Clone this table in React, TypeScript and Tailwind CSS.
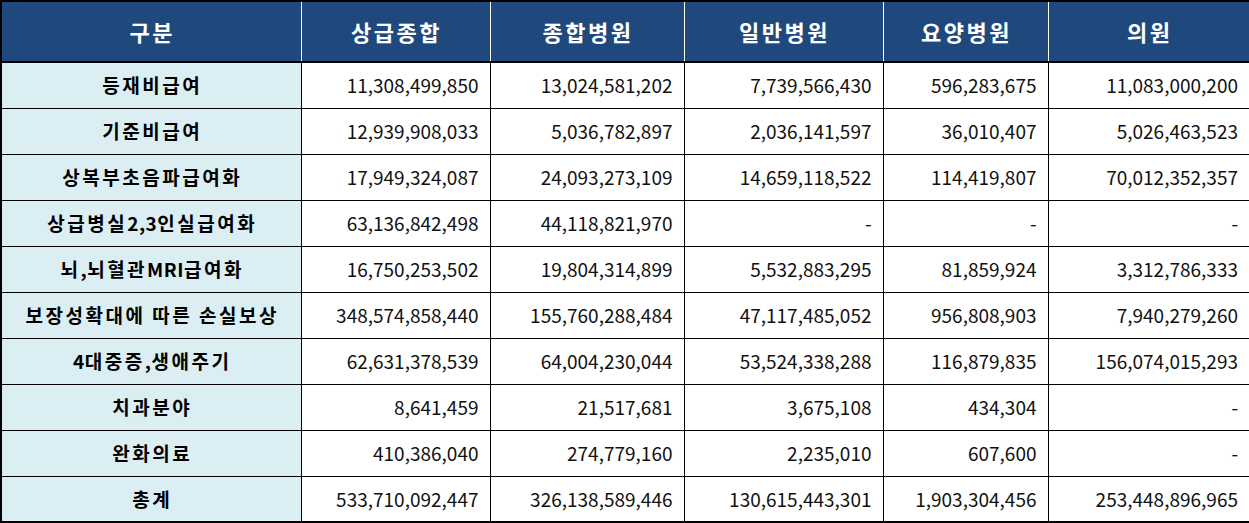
import React from 'react';

type Row = { label: string; values: string[] };

const headers = ['구분', '상급종합', '종합병원', '일반병원', '요양병원', '의원'];

const rows: Row[] = [
  { label: '등재비급여', values: ['11,308,499,850', '13,024,581,202', '7,739,566,430', '596,283,675', '11,083,000,200'] },
  { label: '기준비급여', values: ['12,939,908,033', '5,036,782,897', '2,036,141,597', '36,010,407', '5,026,463,523'] },
  { label: '상복부초음파급여화', values: ['17,949,324,087', '24,093,273,109', '14,659,118,522', '114,419,807', '70,012,352,357'] },
  { label: '상급병실2,3인실급여화', values: ['63,136,842,498', '44,118,821,970', '-', '-', '-'] },
  { label: '뇌,뇌혈관MRI급여화', values: ['16,750,253,502', '19,804,314,899', '5,532,883,295', '81,859,924', '3,312,786,333'] },
  { label: '보장성확대에 따른 손실보상', values: ['348,574,858,440', '155,760,288,484', '47,117,485,052', '956,808,903', '7,940,279,260'] },
  { label: '4대중증,생애주기', values: ['62,631,378,539', '64,004,230,044', '53,524,338,288', '116,879,835', '156,074,015,293'] },
  { label: '치과분야', values: ['8,641,459', '21,517,681', '3,675,108', '434,304', '-'] },
  { label: '완화의료', values: ['410,386,040', '274,779,160', '2,235,010', '607,600', '-'] },
  { label: '총계', values: ['533,710,092,447', '326,138,589,446', '130,615,443,301', '1,903,304,456', '253,448,896,965'] },
];

const colWidths = ['w-[300px]', 'w-[189px]', 'w-[194px]', 'w-[199px]', 'w-[165px]', 'w-[202px]'];

// latin letters, digits and commas are set tighter than the hangul
const Label = ({ text }: { text: string }) => (
  <>
    {text.split(/([A-Za-z0-9,]+)/).map((part, i) =>
      /^[A-Za-z0-9,]+$/.test(part) ? (
        <span key={i} className="tracking-[0.5px]">
          {part}
        </span>
      ) : (
        <span key={i}>{part}</span>
      )
    )}
  </>
);

export default function App() {
  return (
    <div className="w-[1249px] h-[523px] bg-white font-['Noto_Sans_CJK_KR','Noto_Sans',sans-serif]">
      <table className="w-[1249px] table-fixed border-collapse border-2 border-black">
        <colgroup>
          {colWidths.map((w, i) => (
            <col key={i} className={w} />
          ))}
        </colgroup>
        <thead>
          <tr className="h-[61px] bg-[#1f497d]">
            {headers.map((h) => (
              <th
                key={h}
                className="border-x border-white border-b-2 border-b-black pl-[2px] text-center text-[22px] font-bold tracking-[2.5px] text-white"
              >
                {h}
              </th>
            ))}
          </tr>
        </thead>
        <tbody>
          {rows.map((r) => (
            <tr key={r.label} className="h-[46px]">
              <td className="border border-black bg-[#daeef3] pl-[2px] text-center text-[19px] font-bold tracking-[2.5px] text-black">
                <Label text={r.label} />
              </td>
              {r.values.map((v, i) => (
                <td key={i} className="border border-black pr-[11px] text-right text-[19px] text-[#111]">
                  {v}
                </td>
              ))}
            </tr>
          ))}
        </tbody>
      </table>
    </div>
  );
}
